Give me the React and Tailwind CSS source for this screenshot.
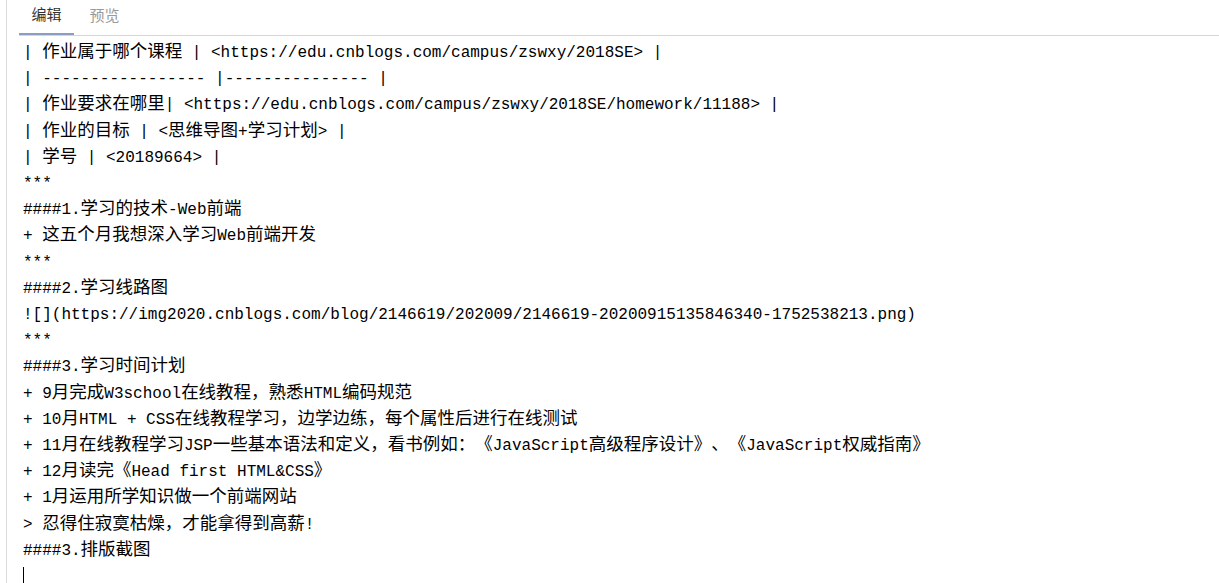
import React from "react";

const lines = [
  "| 作业属于哪个课程 | <https://edu.cnblogs.com/campus/zswxy/2018SE> |",
  "| ----------------- |--------------- |",
  "| 作业要求在哪里| <https://edu.cnblogs.com/campus/zswxy/2018SE/homework/11188> |",
  "| 作业的目标 | <思维导图+学习计划> |",
  "| 学号 | <20189664> |",
  "***",
  "####1.学习的技术-Web前端",
  "+ 这五个月我想深入学习Web前端开发",
  "***",
  "####2.学习线路图",
  "![](https://img2020.cnblogs.com/blog/2146619/202009/2146619-20200915135846340-1752538213.png)",
  "***",
  "####3.学习时间计划",
  "+ 9月完成W3school在线教程，熟悉HTML编码规范",
  "+ 10月HTML + CSS在线教程学习，边学边练，每个属性后进行在线测试",
  "+ 11月在线教程学习JSP一些基本语法和定义，看书例如：《JavaScript高级程序设计》、《JavaScript权威指南》",
  "+ 12月读完《Head first HTML&CSS》",
  "+ 1月运用所学知识做一个前端网站",
  "> 忍得住寂寞枯燥，才能拿得到高薪!",
  "####3.排版截图",
];

const cjk = /([\u3000-\u303f\u4e00-\u9fff\uff00-\uffef]+)/;

function Line({ text }) {
  const parts = text.split(cjk);
  return (
    <div className="whitespace-pre">
      {parts.map((p, i) =>
        i % 2 === 1 ? (
          <span
            key={i}
            className="text-[17.5px] leading-[1] [text-spacing-trim:space-all]"
          >
            {p}
          </span>
        ) : (
          <span key={i}>{p}</span>
        )
      )}
    </div>
  );
}

export default function App() {
  return (
    <div className="h-[583px] w-[1219px] overflow-hidden bg-white">
      <div className="ml-[6px] h-full border-l border-[#dcdcdc]">
        <div className="ml-[12px] flex h-[36px] items-end border-b border-[#d6d6d6] font-['Noto_Sans_CJK_SC',sans-serif] text-[15px]">
          <div className="flex h-[35px] w-[55px] items-center justify-center border-b-2 border-[#8d9dc2] pb-[5px] text-[#333]">
            编辑
          </div>
          <div className="ml-[3px] flex h-[35px] w-[55px] items-center justify-center pb-[5px] text-[#9a9a9a]">
            预览
          </div>
        </div>
        <div className="pl-[16px] pt-[4px] font-['Liberation_Mono','Noto_Sans_CJK_SC',monospace] text-[16px] leading-[26.2px] text-black [text-spacing-trim:space-all]">
          {lines.map((l, i) => (
            <Line key={i} text={l} />
          ))}
          <div className="flex h-[26.2px] items-center">
            <div className="h-[20px] w-px bg-black" />
          </div>
        </div>
      </div>
    </div>
  );
}
